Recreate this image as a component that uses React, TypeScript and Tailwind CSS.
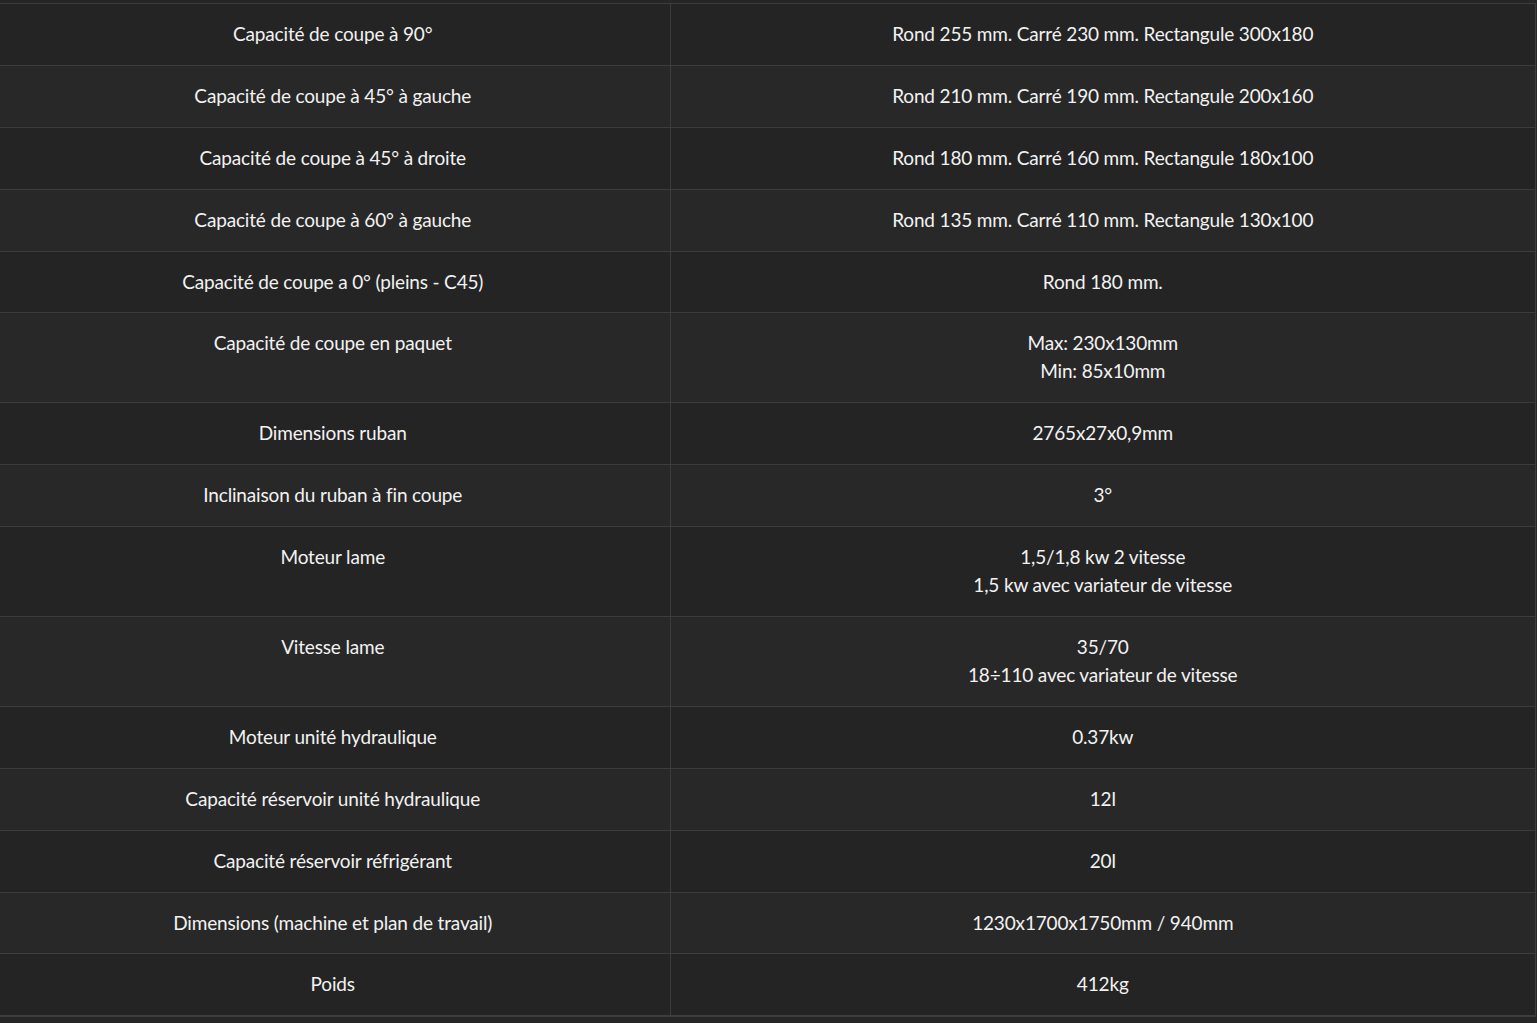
import React from "react";

const rows: [string, string[]][] = [
  ["Capacité de coupe à 90°", ["Rond 255 mm. Carré 230 mm. Rectangule 300x180"]],
  ["Capacité de coupe à 45° à gauche", ["Rond 210 mm. Carré 190 mm. Rectangule 200x160"]],
  ["Capacité de coupe à 45° à droite", ["Rond 180 mm. Carré 160 mm. Rectangule 180x100"]],
  ["Capacité de coupe à 60° à gauche", ["Rond 135 mm. Carré 110 mm. Rectangule 130x100"]],
  ["Capacité de coupe a 0° (pleins - C45)", ["Rond 180 mm."]],
  ["Capacité de coupe en paquet", ["Max: 230x130mm", "Min: 85x10mm"]],
  ["Dimensions ruban", ["2765x27x0,9mm"]],
  ["Inclinaison du ruban à fin coupe", ["3°"]],
  ["Moteur lame", ["1,5/1,8 kw 2 vitesse", "1,5 kw avec variateur de vitesse"]],
  ["Vitesse lame", ["35/70", "18÷110 avec variateur de vitesse"]],
  ["Moteur unité hydraulique", ["0.37kw"]],
  ["Capacité réservoir unité hydraulique", ["12l"]],
  ["Capacité réservoir réfrigérant", ["20l"]],
  ["Dimensions (machine et plan de travail)", ["1230x1700x1750mm / 940mm"]],
  ["Poids", ["412kg"]],
];

export default function App() {
  return (
    <div className="min-h-screen bg-[#262626] pt-[3px] font-['Lato',sans-serif] text-[19px] leading-[28px] tracking-[-0.16px] text-[#f2f2f2]">
      <table className="w-[1536px] border-collapse border-t border-r border-b-2 border-[#3d3d3d]">
        <tbody>
          {rows.map(([label, values], i) => (
            <tr
              key={label}
              className={`border-b border-[#3d3d3d] ${i % 2 === 0 ? "bg-[#242424]" : "bg-[#282828]"}`}
            >
              <td className="w-[670px] border-r border-[#3d3d3d] pl-[14px] pr-[18px] pt-[16px] pb-[16.9px] text-center align-top">
                {label}
              </td>
              <td className="px-4 pt-[16px] pb-[16.9px] text-center align-top">
                {values.map((v) => (
                  <div key={v}>{v}</div>
                ))}
              </td>
            </tr>
          ))}
        </tbody>
      </table>
    </div>
  );
}
